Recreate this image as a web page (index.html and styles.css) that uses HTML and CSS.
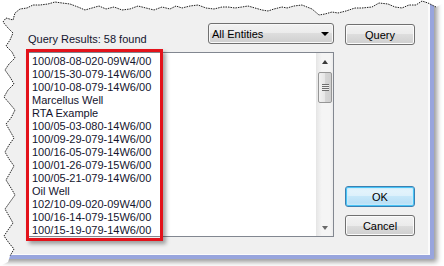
FILE: index.html
```html
<!DOCTYPE html>
<html lang="en">
<head>
  <meta charset="UTF-8" />
  <title>Query Results</title>
  <link rel="stylesheet" href="styles.css">
</head>
<body>

  <!-- Dialog window -->
  <div class="window">
    <div class="client">

      <div class="left-col">
        <div class="header">
          <span class="label">Query Results: 58 found</span>
          <div class="combo">
            <span>All Entities</span>
            <span class="combo-arrow"></span>
          </div>
        </div>

        <div class="listbox">
          <ul class="items">
            <li>100/08-08-020-09W4/00</li>
            <li>100/15-30-079-14W6/00</li>
            <li>100/10-08-079-14W6/00</li>
            <li>Marcellus Well</li>
            <li>RTA Example</li>
            <li>100/05-03-080-14W6/00</li>
            <li>100/09-29-079-14W6/00</li>
            <li>100/16-05-079-14W6/00</li>
            <li>100/01-26-079-15W6/00</li>
            <li>100/05-21-079-14W6/00</li>
            <li>Oil Well</li>
            <li>102/10-09-020-09W4/00</li>
            <li>100/16-14-079-15W6/00</li>
            <li>100/15-19-079-14W6/00</li>
          </ul>
          <div class="scrollbar">
            <div class="sb-btn"><span class="sb-up"></span></div>
            <div class="sb-thumb"><span class="grip"></span></div>
            <div class="sb-track"></div>
            <div class="sb-btn"><span class="sb-down"></span></div>
          </div>
        </div>
      </div>

      <div class="right-col">
        <button class="btn query">Query</button>
        <button class="btn default">OK</button>
        <button class="btn cancel">Cancel</button>
      </div>

    </div>
  </div>

  <!-- Annotation -->
  <div class="highlight"></div>

  <!-- Torn paper edge -->
  <svg class="torn" width="444" height="266" viewBox="0 0 444 266">
    <path class="torn-fill" d="M0,0 L444,0 L444,3 L436,7 L428,3 L422,1 L416,5 L409,5 L402,8 L395,7 L388,4 L379,3 L372,7 L362,8 L355,8 L346,11 L338,13 L332,12 L325,14 L319,15 L312,9 L302,5 L294,6 L287,8 L282,7 L274,9 L268,11 L262,10 L255,8 L248,6 L242,7 L235,8 L228,7 L222,7 L214,9 L206,8 L198,5 L190,6 L182,8 L176,6 L170,9 L162,7 L154,10 L146,8 L138,6 L130,9 L122,10 L114,7 L106,9 L99,6 L92,8 L85,10 L78,7 L70,4 L62,3 L55,2 L48,4 L40,5 L33,5 L27,8 L20,9 L15,13 L13,20 L6,18 L3,22 L8,28 L13,33 L10,40 L6,46 L12,52 L15,58 L9,64 L5,70 L10,77 L14,84 L8,90 L4,97 L10,104 L15,110 L11,118 L6,124 L10,131 L14,138 L9,145 L5,152 L9,159 L14,166 L10,173 L6,180 L11,188 L15,195 L10,202 L5,209 L9,216 L13,223 L8,230 L4,236 L9,243 L14,249 L10,256 L8,262 L0,266 Z"/>
    <path class="torn-line" d="M436,7 L428,3 L422,1 L416,5 L409,5 L402,8 L395,7 L388,4 L379,3 L372,7 L362,8 L355,8 L346,11 L338,13 L332,12 L325,14 L319,15 L312,9 L302,5 L294,6 L287,8 L282,7 L274,9 L268,11 L262,10 L255,8 L248,6 L242,7 L235,8 L228,7 L222,7 L214,9 L206,8 L198,5 L190,6 L182,8 L176,6 L170,9 L162,7 L154,10 L146,8 L138,6 L130,9 L122,10 L114,7 L106,9 L99,6 L92,8 L85,10 L78,7 L70,4 L62,3 L55,2 L48,4 L40,5 L33,5 L27,8 L20,9 L15,13 L13,20 L6,18 L3,22 L8,28 L13,33 L10,40 L6,46 L12,52 L15,58 L9,64 L5,70 L10,77 L14,84 L8,90 L4,97 L10,104 L15,110 L11,118 L6,124 L10,131 L14,138 L9,145 L5,152 L9,159 L14,166 L10,173 L6,180 L11,188 L15,195 L10,202 L5,209 L9,216 L13,223 L8,230 L4,236 L9,243 L14,249 L10,256"/>
  </svg>

</body>
</html>
```

FILE: styles.css
```css
body {
  margin: 0;
  width: 444px;
  height: 266px;
  overflow: hidden;
  background: #fff;
  font-family: "Liberation Sans", Arial, sans-serif;
  font-size: 11px;
  color: #14142e;
  position: relative;
}

.window {
  width: 430px;
  height: 255px;
  border-right: 4px solid #98a5dd;
  border-bottom: 4px solid #98a5dd;
  background: #f0f0f0;
  box-shadow: 3px 3px 5px rgba(0, 0, 0, 0.4);
}

.client {
  box-sizing: border-box;
  height: 255px;
  padding: 23px 0 0 28px;
  border-right: 2px solid #fbfbfb;
  border-bottom: 1px solid #fbfbfb;
  display: grid;
  grid-template-columns: 306px 70px;
  grid-template-rows: 214px;
  column-gap: 11px;
}

.left-col {
  display: flex;
  flex-direction: column;
}

.header {
  height: 29px;
  display: flex;
  justify-content: space-between;
  align-items: flex-start;
}

.label {
  padding-top: 10px;
  line-height: 13px;
}

.combo {
  box-sizing: border-box;
  width: 126px;
  height: 21px;
  padding: 0 4px 0 3px;
  border: 1px solid #707070;
  border-radius: 3px;
  background: linear-gradient(#f2f2f2 0%, #ebebeb 50%, #dddddd 50%, #cfcfcf 100%);
  box-shadow: inset 0 0 0 1px #f8f8f8;
  display: flex;
  align-items: center;
  justify-content: space-between;
  color: #000;
}

.combo-arrow {
  width: 0;
  height: 0;
  border-left: 4px solid transparent;
  border-right: 4px solid transparent;
  border-top: 4px solid #000;
}

.listbox {
  box-sizing: border-box;
  height: 185px;
  border: 1px solid #828790;
  background: #fff;
  display: flex;
  overflow: hidden;
}

.items {
  flex: 1;
  list-style: none;
  margin: 0;
  padding: 2px 0 0 3px;
  line-height: 13px;
  white-space: nowrap;
}

.scrollbar {
  width: 16px;
  display: flex;
  flex-direction: column;
  background: linear-gradient(to right, #e8e8e8, #f5f5f5 30%, #f5f5f5 80%, #ececec);
  border-left: 1px solid #e6e6e6;
}

.sb-btn {
  height: 17px;
  display: flex;
  align-items: center;
  justify-content: center;
}

.sb-up {
  border-left: 3px solid transparent;
  border-right: 3px solid transparent;
  border-bottom: 4px solid #3a3a3a;
}

.sb-down {
  border-left: 3px solid transparent;
  border-right: 3px solid transparent;
  border-top: 4px solid #6a6a6a;
}

.sb-thumb {
  box-sizing: border-box;
  height: 31px;
  margin: 2px 1px 0 1px;
  border: 1px solid #969696;
  border-radius: 2px;
  background: linear-gradient(to right, #f2f2f2, #e6e6e6 50%, #d6d6d6 50%, #cfcfcf);
  display: flex;
  align-items: center;
  justify-content: center;
}

.grip {
  width: 7px;
  height: 7px;
  background: repeating-linear-gradient(#6e6e6e 0, #6e6e6e 1px, #eeeeee 1px, #eeeeee 2px);
}

.sb-track {
  flex: 1;
}

.right-col {
  display: flex;
  flex-direction: column;
  padding-bottom: 1px;
}

.btn {
  box-sizing: border-box;
  width: 70px;
  height: 21px;
  padding: 0;
  border: 1px solid #707070;
  border-radius: 3px;
  background: linear-gradient(#f2f2f2 0%, #ebebeb 50%, #dddddd 50%, #cfcfcf 100%);
  box-shadow: inset 0 0 0 1px #fbfbfb;
  font-family: "Liberation Sans", Arial, sans-serif;
  font-size: 11px;
  color: #000;
}

.query {
  margin-top: 1px;
}

.default {
  margin-top: auto;
  border-color: #3c7fb1;
  background: linear-gradient(#e8f5fc 0%, #dcf0fb 50%, #c6e7f9 50%, #b4dcf4 100%);
  box-shadow: inset 0 0 0 1px #48c4f6, inset 0 0 2px 2px #c9ebfb;
}

.cancel {
  margin-top: 8px;
}

.highlight {
  position: absolute;
  left: 26px;
  top: 49px;
  width: 131px;
  height: 186px;
  border: 3px solid #e3131b;
  box-shadow: 3px 3px 4px rgba(0, 0, 0, 0.35);
}

.torn {
  position: absolute;
  left: 0;
  top: 0;
}

.torn-fill {
  fill: #fff;
}

.torn-line {
  fill: none;
  stroke: #1e1e1e;
  stroke-width: 1;
  stroke-dasharray: 1.5 1;
}
```
